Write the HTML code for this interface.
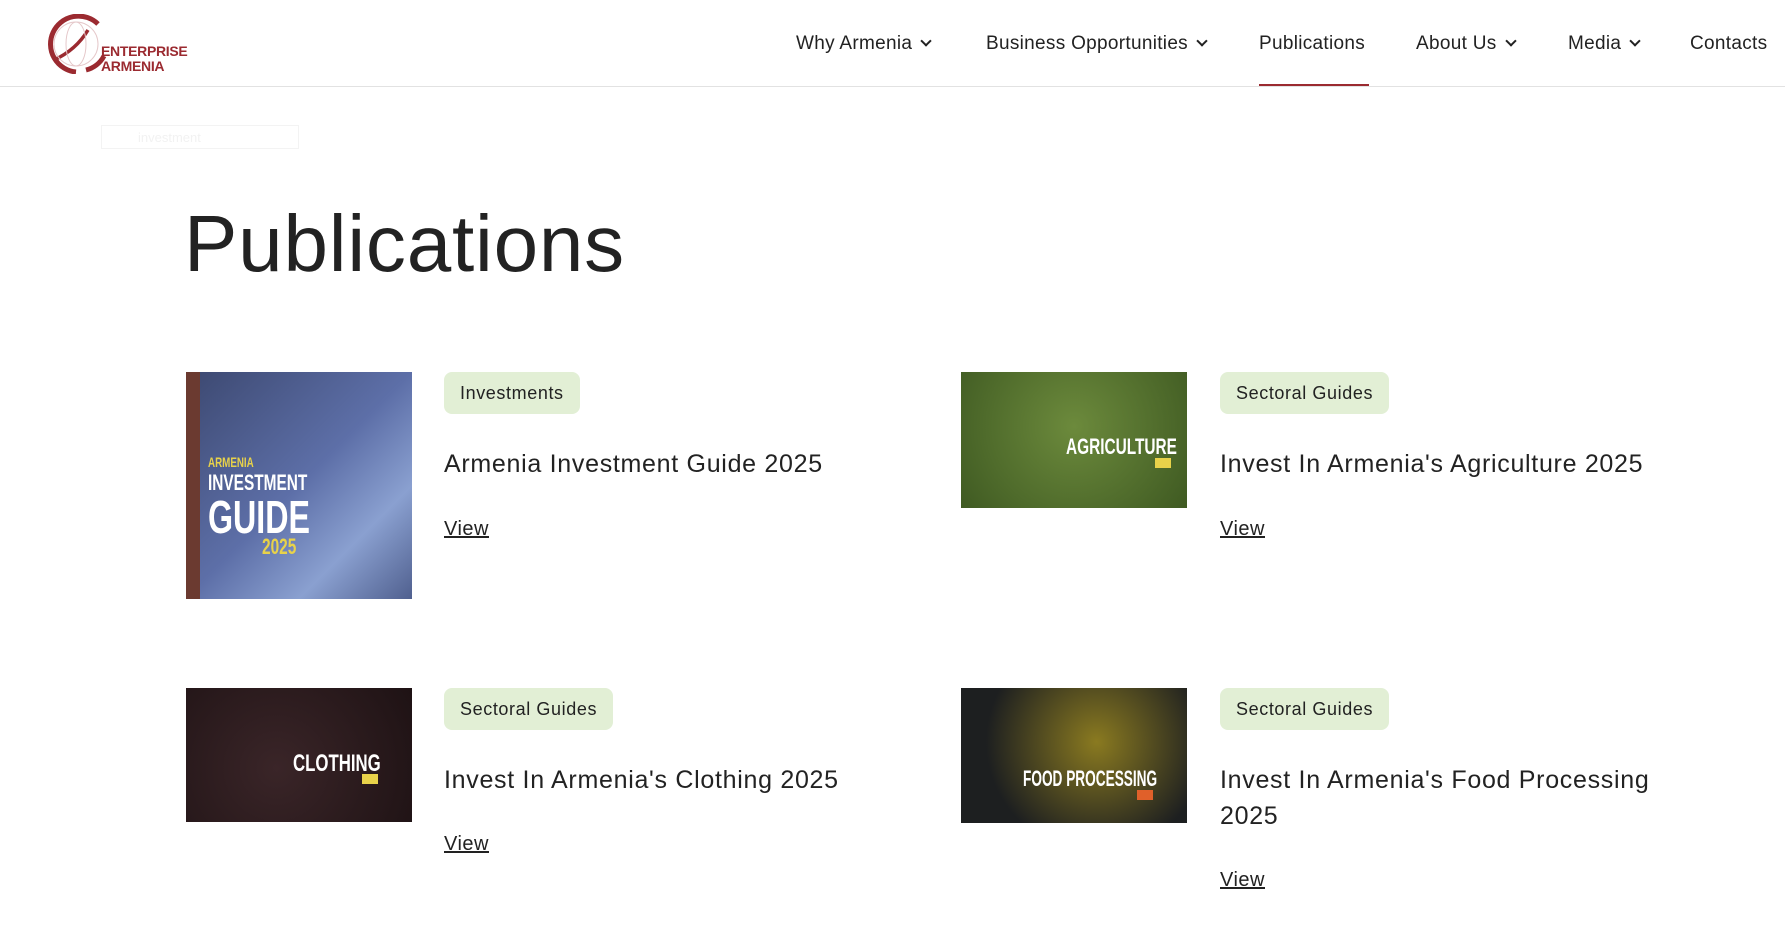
<!DOCTYPE html>
<html><head><meta charset="utf-8"><style>
body{margin:0;width:1785px;height:940px;overflow:hidden;background:#fff;font-family:"Liberation Sans",sans-serif;color:#222;position:relative}
.a{position:absolute}
.hdr{left:0;top:0;width:1785px;height:86px;border-bottom:1px solid #e2e2e2}
.nav{top:33px;font-size:19px;color:#222;white-space:nowrap;letter-spacing:.3px}
.chev{display:inline-block;width:6px;height:6px;border-right:2px solid #222;border-bottom:2px solid #222;transform:rotate(45deg);margin-left:10px;position:relative;top:-4px}
.tag{background:#e2efd5;border-radius:8px;font-size:18px;padding:0 16px;height:42px;line-height:42px;color:#222;letter-spacing:.6px}
.title{font-size:25px;color:#222;line-height:36px;letter-spacing:.7px}
.view{font-size:20px;text-decoration:underline;color:#222;letter-spacing:.5px}
.img{overflow:hidden}
.cov{color:#fff;font-weight:bold;white-space:nowrap;transform-origin:0 0;transform:scaleX(.7)}
</style></head><body>
<div class="a hdr"></div>
<svg class="a" style="left:46px;top:14px" width="65" height="60" viewBox="0 0 65 60">
<path d="M52 10 A28 28 0 1 0 30 58" fill="none" stroke="#9b2a30" stroke-width="5"/>
<path d="M40 56 A28 28 0 0 0 58 42" fill="none" stroke="#9b2a30" stroke-width="5"/>
<path d="M42 16 Q30 36 8 46" fill="none" stroke="#9b2a30" stroke-width="3.5"/>
<ellipse cx="30" cy="30" rx="22" ry="22" fill="none" stroke="#e5c8ca" stroke-width="1"/>
<ellipse cx="30" cy="30" rx="10" ry="22" fill="none" stroke="#e5c8ca" stroke-width="1"/>
</svg>
<div class="a" style="left:101px;top:44px;color:#9b2a30;font-weight:bold;font-size:14px;line-height:15px;letter-spacing:-.3px">ENTERPRISE<br>ARMENIA</div>
<div class="a nav" style="left:796px">Why Armenia<span class="chev"></span></div>
<div class="a nav" style="left:986px">Business Opportunities<span class="chev"></span></div>
<div class="a nav" style="left:1259px">Publications</div>
<div class="a" style="left:1259px;top:84px;width:110px;height:2px;background:#9b2a30"></div>
<div class="a nav" style="left:1416px">About Us<span class="chev"></span></div>
<div class="a nav" style="left:1568px">Media<span class="chev"></span></div>
<div class="a nav" style="left:1690px">Contacts</div>
<div class="a" style="left:101px;top:125px;width:198px;height:24px;border:1px solid #f3f3f3;color:#f2f2f2;font-size:13px;line-height:24px;padding-left:36px;box-sizing:border-box">investment</div>
<div class="a" style="left:184px;top:198px;font-size:80px;color:#222;letter-spacing:.8px">Publications</div>

<div class="a img" style="left:186px;top:372px;width:226px;height:227px;background:linear-gradient(135deg,#3c4870,#5d6fa8 50%,#8aa0d0 75%,#50608f)">
<div class="a" style="left:0;top:0;width:14px;height:227px;background:#6b3a30"></div>
<div class="a cov" style="left:22px;top:82px;font-size:14px;color:#e8d24a">ARMENIA</div>
<div class="a cov" style="left:22px;top:98px;font-size:22px">INVESTMENT</div>
<div class="a cov" style="left:22px;top:118px;font-size:46px">GUIDE</div>
<div class="a cov" style="left:76px;top:162px;font-size:22px;color:#e8d24a">2025</div>
</div>
<div class="a tag" style="left:444px;top:372px">Investments</div>
<div class="a title" style="left:444px;top:446px">Armenia Investment Guide 2025</div>
<div class="a view" style="left:444px;top:518px">View</div>

<div class="a img" style="left:961px;top:372px;width:226px;height:136px;background:radial-gradient(circle at 50% 40%,#6c8a3c,#3f5a22)">
<div class="a cov" style="left:105px;top:62px;font-size:22px">AGRICULTURE</div>
<div class="a" style="left:194px;top:86px;width:16px;height:10px;background:#e8d24a"></div></div>
<div class="a tag" style="left:1220px;top:372px">Sectoral Guides</div>
<div class="a title" style="left:1220px;top:446px">Invest In Armenia's Agriculture 2025</div>
<div class="a view" style="left:1220px;top:518px">View</div>

<div class="a img" style="left:186px;top:688px;width:226px;height:134px;background:radial-gradient(circle at 40% 60%,#3a2528,#1e1214)">
<div class="a cov" style="left:107px;top:62px;font-size:24px">CLOTHING</div>
<div class="a" style="left:176px;top:86px;width:16px;height:10px;background:#e8d24a"></div></div>
<div class="a tag" style="left:444px;top:688px">Sectoral Guides</div>
<div class="a title" style="left:444px;top:762px">Invest In Armenia's Clothing 2025</div>
<div class="a view" style="left:444px;top:833px">View</div>

<div class="a img" style="left:961px;top:688px;width:226px;height:135px;background:radial-gradient(circle at 60% 40%,#8a7a20,#1d1f20 70%)">
<div class="a cov" style="left:62px;top:78px;font-size:22px;transform:scaleX(.62)">FOOD PROCESSING</div>
<div class="a" style="left:176px;top:102px;width:16px;height:10px;background:#e0602a"></div></div>
<div class="a tag" style="left:1220px;top:688px">Sectoral Guides</div>
<div class="a title" style="left:1220px;top:762px">Invest In Armenia's Food Processing<br>2025</div>
<div class="a view" style="left:1220px;top:869px">View</div>
</body></html>
